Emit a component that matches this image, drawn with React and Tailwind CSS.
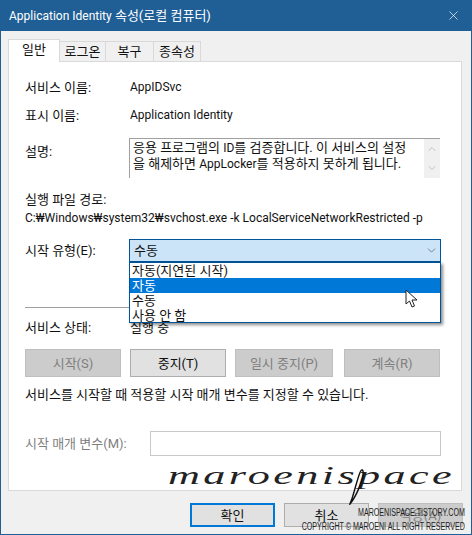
import React from 'react';
import { ChevronDown, ChevronUp, X } from 'lucide-react';

const font = { fontFamily: 'Roboto, "Noto Sans CJK KR", sans-serif' };

function Latin({ children }) {
    return <span className="text-[12px]">{children}</span>;
}

function Tab({ label, active, width }) {
    return active ? (
        <div className={`${width} h-[23px] -mb-px z-10 bg-white border border-b-0 border-[#d9d9d9] flex items-center justify-center pb-1`}>{label}</div>
    ) : (
        <div className={`${width} h-[20px] bg-[#f0f0f0] border border-b-0 border-l-0 border-[#d9d9d9] flex items-center justify-center`}>{label}</div>
    );
}

function Row({ label, children, className = '' }) {
    return (
        <div className={`flex items-center h-5 ${className}`}>
            <div className="w-[105px] shrink-0">{label}</div>
            <div>{children}</div>
        </div>
    );
}

function ServiceButton({ label, width, enabled }) {
    return (
        <div className={`${width} h-7 flex items-center justify-center border ${enabled ? 'bg-[#e1e1e1] border-[#adadad] text-[#111]' : 'bg-[#cccccc] border-[#bfbfbf] text-[#7f7f7f]'}`}>
            {label}
        </div>
    );
}

function FooterButton({ label, primary, disabled }) {
    return (
        <div className={`w-[85px] h-[24px] flex items-center justify-center ${primary ? 'bg-[#e1e1e1] border-2 border-[#0078d7]' : disabled ? 'bg-[#cccccc] border border-[#bfbfbf] text-[#7f7f7f]' : 'bg-[#e1e1e1] border border-[#adadad]'}`}>
            {label}
        </div>
    );
}

export default function App() {
    return (
        <div className="relative w-[472px] h-[535px] overflow-hidden bg-[#f0f0f0] border border-t-0 border-[#1f5f96] text-[13px] leading-[15px] text-[#111]" style={font}>
            {/* title bar */}
            <div className="h-[31px] -mx-px bg-[#1f5f96] flex items-center justify-between pl-[9px] pr-[11px] text-white">
                <span><Latin>Application Identity</Latin> 속성(로컬 컴퓨터)</span>
                <X size={15} strokeWidth={1.1} />
            </div>

            {/* tabs */}
            <div className="flex items-end ml-[7px] mt-2 h-[22px]">
                <Tab label="일반" active width="w-[52px]" />
                <Tab label="로그온" width="w-[46px]" />
                <Tab label="복구" width="w-[48px]" />
                <Tab label="종속성" width="w-[47px]" />
            </div>

            {/* panel */}
            <div className="relative ml-[7px] w-[454px] h-[430px] bg-white border border-[#d9d9d9] pl-4 pr-5 pt-[15px]">
                <Row label="서비스 이름:"><Latin>AppIDSvc</Latin></Row>
                <Row label="표시 이름:" className="mt-2"><Latin>Application Identity</Latin></Row>

                <div className="flex mt-[13px] h-10">
                    <div className="w-[104px] shrink-0 pt-[6px]">설명:</div>
                    <div className="relative w-[311px] h-10 border-t border-l border-[#a0a0a0] pl-[3px] pr-[17px] pt-px">
                        <div className="whitespace-nowrap leading-[15px]">응용 프로그램의 <Latin>ID</Latin>를 검증합니다. 이 서비스의 설정</div>
                        <div className="whitespace-nowrap leading-[15px]">을 해제하면 <Latin>AppLocker</Latin>를 적용하지 못하게 됩니다.</div>
                        <div className="absolute right-0 top-0 bottom-0 w-4 bg-[#f0f0f0] flex flex-col items-center justify-between py-1 text-[#a3a3a3]">
                            <ChevronUp size={12} strokeWidth={1.2} />
                            <ChevronDown size={12} strokeWidth={1.2} />
                        </div>
                    </div>
                </div>

                <div className="mt-[11px] h-5 flex items-center">실행 파일 경로:</div>
                <div className="h-5 flex items-center -mt-px whitespace-nowrap text-[12px]">C:₩Windows₩system32₩svchost.exe -k LocalServiceNetworkRestricted -p</div>

                <div className="flex items-center mt-[11px] h-[23px]">
                    <div className="w-[104px] shrink-0">시작 유형(E):</div>
                    <div className="w-[312px] h-[23px] bg-[#cce4f7] border border-[#005499] flex items-center justify-between pl-1 pr-[2px]">
                        <span>수동</span>
                        <ChevronDown size={13} strokeWidth={1} className="text-[#333]" />
                    </div>
                </div>

                <div className="mt-[45px] h-px w-[416px] bg-[#a0a0a0]" />

                <Row label="서비스 상태:" className="mt-[9px]">실행 중</Row>

                <div className="flex mt-3">
                    <ServiceButton label="시작(S)" width="w-[96px]" />
                    <div className="ml-[9px]"><ServiceButton label="중지(T)" width="w-[96px]" enabled /></div>
                    <div className="ml-[9px]"><ServiceButton label="일시 중지(P)" width="w-[98px]" /></div>
                    <div className="ml-[11px]"><ServiceButton label="계속(R)" width="w-[96px]" /></div>
                </div>

                <div className="mt-[7px] h-5 flex items-center whitespace-nowrap">서비스를 시작할 때 적용할 시작 매개 변수를 지정할 수 있습니다.</div>

                <div className="flex items-center mt-[27px]">
                    <div className="w-[125px] shrink-0 text-[#7f7f7f]">시작 매개 변수(M):</div>
                    <div className="w-[291px] h-[25px] bg-white border border-[#c8c8c8]" />
                </div>

                {/* dropdown list */}
                <div className="absolute left-[120px] top-[200px] w-[312px] h-[61px] bg-white border border-[#005499] shadow-[2px_2px_3px_rgba(0,0,0,0.45)] flex flex-col">
                    <div className="h-[15px] pl-[2px] flex items-center">자동(지연된 시작)</div>
                    <div className="h-[15px] pl-[2px] flex items-center bg-[#0078d7] text-white">자동</div>
                    <div className="h-[15px] pl-[2px] flex items-center">수동</div>
                    <div className="h-[15px] pl-[2px] flex items-center">사용 안 함</div>
                </div>
            </div>

            {/* footer */}
            <div className="flex justify-end gap-[9px] mt-3 pr-2">
                <FooterButton label="확인" primary />
                <FooterButton label="취소" />
                <FooterButton label="적용(A)" disabled />
            </div>

            {/* mouse cursor */}
            <svg className="absolute left-[404px] top-[289px]" width="14" height="20" viewBox="0 0 14 20">
                <path d="M1 1 L1 15 L4.5 12 L7 18 L9.5 17 L7 11 L12 11 Z" fill="white" stroke="#222" strokeWidth="1" strokeLinejoin="round" />
            </svg>

            {/* watermark */}
            <div className="absolute left-[167px] top-[460px] text-[26px] leading-[32px] italic text-[#222] whitespace-nowrap tracking-[2px] origin-left scale-x-[1.7]" style={{ fontFamily: '"Liberation Serif", serif' }}>maroenispace</div>
            <svg className="absolute left-[340px] top-[462px]" width="30" height="46" viewBox="0 0 30 46">
                <path d="M9 42 C14 36 24 16 22 9 C20 4 17 16 13 30 C11 38 8 44 9 42" fill="none" stroke="#111" strokeWidth="1.4" />
            </svg>
            <div className="absolute right-[6px] top-[506px] text-[10px] leading-[13px] text-[#222] text-right whitespace-nowrap origin-right scale-x-[0.71]" style={{ fontFamily: '"Liberation Sans", sans-serif' }}>
                <div>MAROENISPACE.TISTORY.COM</div>
                <div className="mt-px">COPYRIGHT © MAROENI ALL RIGHT RESERVED</div>
            </div>
        </div>
    );
}
